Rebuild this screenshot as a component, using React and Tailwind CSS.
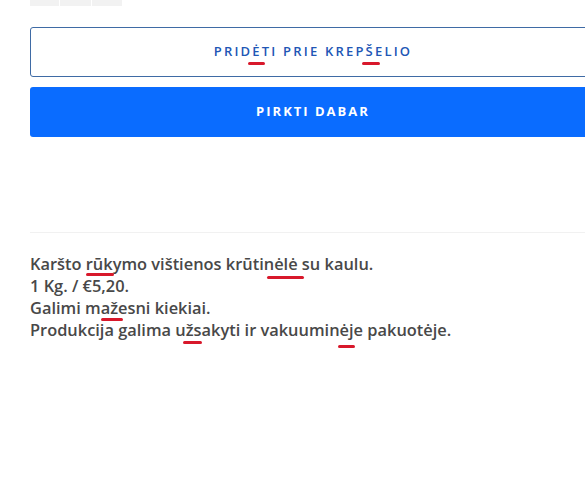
import React from 'react'

function Mark({ children, cls }) {
  return (
    <span className="relative inline-block">
      {children}
      <span className={`absolute h-[3px] rounded-full bg-[#d8182b] ${cls}`} />
    </span>
  )
}

export default function App() {
  return (
    <div className="w-[585px] h-[500px] overflow-hidden bg-white" style={{ fontFamily: '"Open Sans", "Liberation Sans", sans-serif' }}>
      <div className="w-[566px] ml-[30px]">
        <div className="flex gap-px h-[6px]">
          <div className="w-[29px] bg-[#f2f2f2]" />
          <div className="w-[31px] bg-[#f2f2f2]" />
          <div className="w-[30px] bg-[#f2f2f2]" />
        </div>

        <button
          type="button"
          className="mt-[21px] w-full h-[50px] rounded-[3px] border border-[#3f6ba5] bg-white text-[13px] font-semibold tracking-[2.2px] text-[#2156b5]"
        >
          PRID<Mark cls="-left-[4px] -right-[3px] bottom-[-3px]">Ė</Mark>TI PRIE KREP<Mark cls="-left-[4px] -right-[5px] bottom-[-3px]">Š</Mark>ELIO
        </button>

        <button
          type="button"
          className="mt-[10px] w-full h-[50px] rounded-[3px] bg-[#0a6cff] text-[13px] font-bold tracking-[2px] text-white"
        >
          PIRKTI DABAR
        </button>

        <div className="mt-[95px] h-px bg-[#f1f1f1]" />

        <div className="mt-[20px] text-[16.4px] leading-[22px] font-semibold text-[#484848]">
          <p>
            Karšto <Mark cls="left-0 -right-[1px] bottom-[-1px]">rūk</Mark>ymo vištienos krūtin<Mark cls="-left-[7px] -right-[6px] bottom-[-4px]">ėlė</Mark> su kaulu.
          </p>
          <p>1 Kg. / €5,20.</p>
          <p>
            Galimi m<Mark cls="left-0 -right-[5px] bottom-[-2px]">až</Mark>esni kiekiai.
          </p>
          <p>
            Produkcija galima u<Mark cls="-left-[3px] -right-[8px] bottom-[-3px]">ž</Mark>sakyti ir vakuumin<Mark cls="-left-[2px] -right-[6px] bottom-[-7px]">ė</Mark>je pakuotėje.
          </p>
        </div>
      </div>
    </div>
  )
}
